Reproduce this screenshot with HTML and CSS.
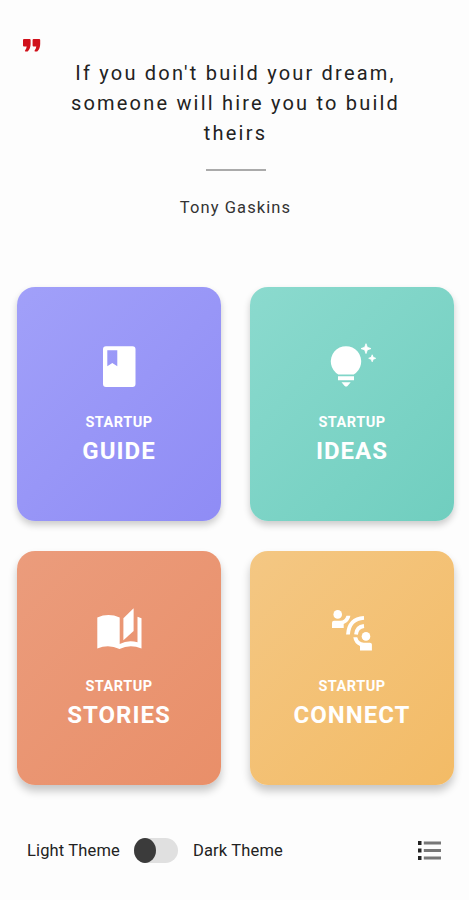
FILE: index.html
```
<!DOCTYPE html>
<html lang="en">
<head>
    <meta charset="UTF-8">
    <meta name="viewport" content="width=device-width, initial-scale=1.0">
    <title>Startup</title>
    <link rel="stylesheet" href="styles.css">
</head>
<body>
    <header class="quote">
        <svg class="quote-mark" viewBox="0 0 18 14">
            <path d="M1 0h5.600q1 0 1 1v4q0 4.500-3 7.500H2.400q-1-.3-.2-1.300 1.300-1.700 1.500-3.700H1q-1 0-1-1V1q0-1 1-1zM10.600 0h5.600q1 0 1 1v4q0 4.500-3 7.500H12q-1-.3-.2-1.300 1.300-1.700 1.500-3.700h-2.700q-1 0-1-1V1q0-1 1-1z"/>
        </svg>
        <p class="quote-text">If you don't build your dream, someone will hire you to build theirs</p>
        <div class="divider"></div>
        <p class="author">Tony Gaskins</p>
    </header>

    <main class="cards">
        <a class="card guide">
            <svg class="icon" viewBox="-1 0 60 60">
                <path fill-rule="evenodd" d="M16 11.300h26.500a3 3 0 0 1 3 3v34.600a3 3 0 0 1-3 3H16a3 3 0 0 1-3-3V14.300a3 3 0 0 1 3-3zM17.300 15.300v16l5-3.400 5 3.400v-16z"/>
            </svg>
            <span class="label">STARTUP</span>
            <span class="name">GUIDE</span>
        </a>
        <a class="card ideas">
            <svg class="icon" viewBox="2 0 60 60">
                <path d="M18.300 39.500A15.200 15.200 0 1 1 33.700 39.500zM18 41.300h16v4H18zM21.500 47.200h9.200l-3.200 3.700q-1.400 1.200-2.800 0z"/>
                <path d="M46 8.700l1.300 3.600 3.700 1.300-3.700 1.300-1.300 3.700-1.300-3.700-3.700-1.300 3.700-1.300zM52.200 19.800l1 2.500 2.500 1-2.500 1-1 2.500-1-2.500-2.500-1 2.500-1z" class="spark"/>
            </svg>
            <span class="label">STARTUP</span>
            <span class="name">IDEAS</span>
        </a>
        <a class="card stories">
            <svg class="icon" viewBox="-1 -1 60 60">
                <path d="M7.300 17.500Q18.500 12.600 29.700 17.500V44Q38 39.600 47.500 42.300V16.800l4 1.400v30.300Q40 43.600 29.500 49 18.500 43.600 7.300 48.500z"/>
                <path d="M33.400 18.300L43.600 8.300v22.800L33.400 40.300z"/>
            </svg>
            <span class="label">STARTUP</span>
            <span class="name">STORIES</span>
        </a>
        <a class="card connect">
            <svg class="icon" viewBox="2 -1 60 60">
                <circle cx="17.700" cy="14.400" r="4.300"/>
                <path d="M12 28v-5.300q0-1.900 2-1.900h6.200q4.800-.3 6.300-5.100h3.900q-.8 5.500-6.700 8.200V28z"/>
                <circle cx="46" cy="36.400" r="4.300"/>
                <path d="M51.900 50.600v-6q0-1.900-2-1.900h-6.200q-5-.3-6.500-5.500h-3.900q.8 6.200 6.700 8.700v4.700z"/>
                <path class="wave" d="M44 17.900Q29 18.800 28 34.500M44 26Q36.700 26.800 36 34.500"/>
            </svg>
            <span class="label">STARTUP</span>
            <span class="name">CONNECT</span>
        </a>
    </main>

    <footer class="bottom-bar">
        <span>Light Theme</span>
        <div class="toggle"><div class="knob"></div></div>
        <span>Dark Theme</span>
        <svg class="menu" viewBox="0 0 23 19">
            <path class="dots" d="M0 0h3.500v4H0zM0 7.500h3.500v4H0zM0 15h3.500v4H0z"/>
            <path class="lines" d="M5.800.5H23v3H5.800zM5.800 8H23v3H5.800zM5.800 15.500H23v3H5.800z"/>
        </svg>
    </footer>
</body>
</html>
```
FILE: styles.css
```
* {
    box-sizing: border-box;
}

body {
    margin: 0;
    height: 900px;
    background: #fdfdfd;
    font-family: Roboto, sans-serif;
    color: #222;
    overflow: hidden;
}

.quote {
    height: 287px;
    padding: 39px 0 0 2px;
    display: flex;
    flex-direction: column;
    align-items: center;
}

.quote-mark {
    width: 18px;
    height: 14px;
    margin-left: 21px;
    align-self: flex-start;
    fill: #d0111b;
}

.quote-text {
    width: 350px;
    margin: 5px 0 0;
    font-size: 20px;
    line-height: 30px;
    letter-spacing: 2.2px;
    text-align: center;
}

.divider {
    width: 60px;
    height: 2px;
    margin-top: 21px;
    background: #aaa;
}

.author {
    margin: 27px 0 0;
    font-size: 16.5px;
    line-height: 20px;
    letter-spacing: 1.1px;
    color: #333;
}

.cards {
    display: grid;
    grid-template-columns: 204px 204px;
    grid-auto-rows: 234px;
    gap: 30px 29px;
    margin-left: 17px;
}

.card {
    display: flex;
    flex-direction: column;
    align-items: center;
    padding-top: 48px;
    border-radius: 18px;
    color: #fff;
    box-shadow: 0 4px 7px rgba(0, 0, 0, 0.2);
}

.guide {
    background: linear-gradient(135deg, #a1a0f9, #8f8cf5);
}

.ideas {
    background: linear-gradient(135deg, #8bdace, #70cebf);
}

.stories {
    background: linear-gradient(135deg, #eb9c7c, #e98f69);
}

.connect {
    background: linear-gradient(135deg, #f4c783, #f3bb66);
}

.stories,
.connect {
    box-shadow: 0 6px 9px rgba(0, 0, 0, 0.22);
}

.icon {
    width: 60px;
    height: 60px;
    fill: #fff;
}

.spark {
    stroke: #fff;
    stroke-width: 0.8;
}

.wave {
    fill: none;
    stroke: #fff;
    stroke-width: 3.8;
}

.label {
    margin-top: 18px;
    font-size: 14.5px;
    font-weight: 700;
    line-height: 20px;
    letter-spacing: 0.5px;
}

.name {
    margin-top: 3px;
    font-size: 24px;
    font-weight: 700;
    line-height: 30px;
    letter-spacing: 1px;
}

.bottom-bar {
    display: flex;
    align-items: center;
    height: 30px;
    margin-top: 50px;
    padding: 0 28px 0 27px;
    font-size: 16.5px;
    letter-spacing: 0.15px;
}

.toggle {
    width: 44px;
    height: 25px;
    margin: 0 15px 0 14px;
    border-radius: 13px;
    background: #e0e0e0;
}

.knob {
    width: 22px;
    height: 25px;
    border-radius: 50%;
    background: #3b3b3b;
}

.menu {
    width: 23px;
    height: 19px;
    margin-left: auto;
}

.dots {
    fill: #222;
}

.lines {
    fill: #777;
}
```
